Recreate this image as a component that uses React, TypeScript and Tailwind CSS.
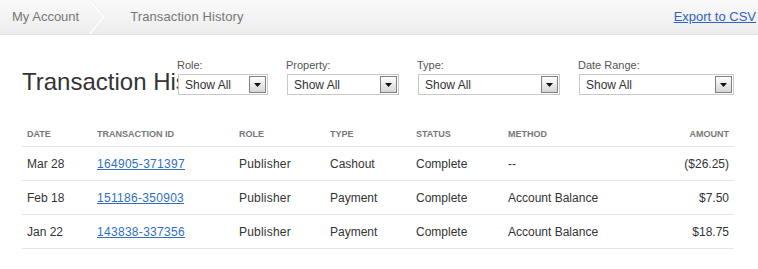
import React from 'react';

type Row = {
  date: string;
  id: string;
  role: string;
  type: string;
  status: string;
  method: string;
  amount: string;
};

const rows: Row[] = [
  { date: 'Mar 28', id: '164905-371397', role: 'Publisher', type: 'Cashout', status: 'Complete', method: '--', amount: '($26.25)' },
  { date: 'Feb 18', id: '151186-350903', role: 'Publisher', type: 'Payment', status: 'Complete', method: 'Account Balance', amount: '$7.50' },
  { date: 'Jan 22', id: '143838-337356', role: 'Publisher', type: 'Payment', status: 'Complete', method: 'Account Balance', amount: '$18.75' },
];

const filters = [
  { label: 'Role:', width: 'w-[90px]' },
  { label: 'Property:', width: 'w-[112px]' },
  { label: 'Type:', width: 'w-[142px]' },
  { label: 'Date Range:', width: 'w-[155px]' },
];

const cols = 'grid grid-cols-[70px_142px_91px_86px_92px_1fr_100px]';

function SelectBox({ width }: { width: string }) {
  return (
    <div className={`${width} h-[21px] flex items-center justify-between border border-[#c9c9c9] bg-white pl-[6px] pr-px`}>
      <span className="text-[12px] leading-none text-[#333]">Show All</span>
      <span className="w-[17px] h-[17px] flex items-center justify-center border border-[#808080] bg-gradient-to-b from-white to-[#d6d6d6]">
        <svg width="7" height="4" viewBox="0 0 7 4">
          <path d="M0 0h7L3.5 4z" fill="#111" />
        </svg>
      </span>
    </div>
  );
}

export default function App() {
  return (
    <div className="w-[758px] h-[269px] bg-white font-['Liberation_Sans',Arial,sans-serif] overflow-hidden">
      {/* Breadcrumb bar */}
      <div className="h-[35px] flex items-center justify-between bg-gradient-to-b from-[#fafafa] to-[#ededed] border-b border-[#e0e0e0]">
        <div className="flex items-center h-full">
          <span className="pl-[12px] text-[13px] text-[#777]">My Account</span>
          <svg className="ml-[11px]" width="18" height="34" viewBox="0 0 18 34">
            <path d="M1 0L15 17L1 34" fill="none" stroke="#e2e2e2" strokeWidth="1" />
            <path d="M0 0L14 17L0 34" fill="none" stroke="#ffffff" strokeWidth="1.5" />
          </svg>
          <span className="ml-[22px] text-[13px] text-[#777] tracking-[0.1px]">Transaction History</span>
        </div>
        <a href="#" className="pr-[2px] text-[13px] text-[#2f62c4] underline">Export to CSV</a>
      </div>

      {/* Title + filters */}
      <div className="grid mt-[24px]">
        <h1 className="[grid-area:1/1] ml-[22px] mt-[9px] text-[24px] leading-[28px] text-[#333] font-normal">
          Transaction History
        </h1>
        <div className="[grid-area:1/1] ml-[178px] flex gap-[19px]">
          {filters.map((f) => (
            <div key={f.label} className="flex flex-col">
              <span className="h-[15px] -ml-px text-[11px] leading-[13px] text-[#555]">{f.label}</span>
              <SelectBox width={f.width} />
            </div>
          ))}
        </div>
      </div>

      {/* Table */}
      <div className="mx-[22px] w-[712px] mt-[28px] text-[12px] text-[#333]">
        <div className={`${cols} h-[23px] items-center border-b border-[#e6e6e6] text-[9px] font-bold text-[#777]`}>
          <span className="pl-[5px]">DATE</span>
          <span className="pl-[5px]">TRANSACTION ID</span>
          <span className="pl-[5px]">ROLE</span>
          <span className="pl-[5px]">TYPE</span>
          <span className="pl-[5px]">STATUS</span>
          <span className="pl-[5px]">METHOD</span>
          <span className="pr-[5px] text-right">AMOUNT</span>
        </div>
        {rows.map((r) => (
          <div key={r.id} className={`${cols} h-[34px] items-center border-b border-[#e6e6e6]`}>
            <span className="pl-[5px]">{r.date}</span>
            <span className="pl-[5px]">
              <a href="#" className="text-[#2f6fbf] underline tracking-[0.3px]">{r.id}</a>
            </span>
            <span className="pl-[5px] tracking-[0.2px]">{r.role}</span>
            <span className="pl-[5px]">{r.type}</span>
            <span className="pl-[5px]">{r.status}</span>
            <span className="pl-[5px]">{r.method}</span>
            <span className="pr-[5px] text-right">{r.amount}</span>
          </div>
        ))}
      </div>
    </div>
  );
}
